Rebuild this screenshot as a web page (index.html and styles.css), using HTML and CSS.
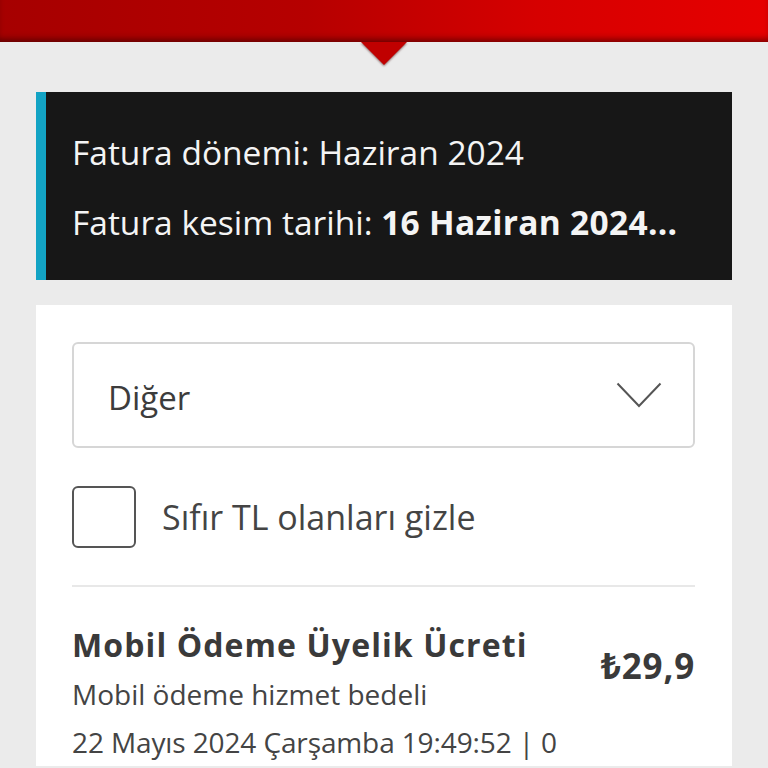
FILE: index.html
```html
<!DOCTYPE html>
<html lang="tr">
<head>
<meta charset="utf-8">
<title>Fatura</title>
<link rel="stylesheet" href="styles.css">
</head>
<body>
<header class="topbar"></header>
<main class="content">
  <section class="period">
    <p class="period-line">Fatura dönemi: Haziran 2024</p>
    <p class="period-line">Fatura kesim tarihi: <b>16 Haziran 2024...</b></p>
  </section>
  <section class="card">
    <div class="select">
      <span class="select-text">Diğer</span>
      <svg class="chevron" width="46" height="26" viewBox="0 0 46 26"><path d="M1.5 1.5 L23 24 L44.5 1.5" fill="none" stroke="#555" stroke-width="2"/></svg>
    </div>
    <label class="check-row">
      <span class="checkbox"></span>
      <span class="check-label">Sıfır TL olanları gizle</span>
    </label>
    <div class="item">
      <div class="item-info">
        <div class="item-title">Mobil Ödeme Üyelik Ücreti</div>
        <div class="item-sub">Mobil ödeme hizmet bedeli</div>
        <div class="item-date">22 Mayıs 2024 Çarşamba 19:49:52 | 0</div>
      </div>
      <div class="item-price">₺29,9</div>
    </div>
  </section>
</main>
</body>
</html>
```
FILE: styles.css
```css
* { box-sizing: border-box; }
html, body { margin: 0; padding: 0; }
body {
  background: #ebebeb;
  font-family: "Open Sans", "Noto Sans", sans-serif;
  color: #3a3a3a;
  height: 768px;
  overflow: hidden;
}
.topbar {
  position: relative;
  height: 42px;
  background: linear-gradient(90deg, #a60000 0%, #b60000 40%, #d60000 70%, #e60000 100%);
  box-shadow: inset 0 -6px 6px -3px rgba(40,0,0,0.55);
}
.topbar::after {
  content: "";
  position: absolute;
  left: 361px;
  top: 42px;
  width: 0;
  height: 0;
  border-left: 23px solid transparent;
  border-right: 23px solid transparent;
  border-top: 23px solid #c00000;
  filter: drop-shadow(0 1px 1px rgba(60,0,0,0.6));
}
.content {
  padding: 50px 36px 0 36px;
}
.period {
  height: 188px;
  background: #171717;
  border-left: 10px solid #13a3c4;
  padding: 25px 0 0 26px;
  color: #f4f4f4;
}
.period-line {
  margin: 0;
  font-size: 33.5px;
  line-height: 70px;
  white-space: nowrap;
}
.period-line b { font-weight: 700; letter-spacing: 0.3px; }
.card {
  margin-top: 25px;
  background: #fff;
  padding: 37px 37px 0 36px;
}
.select {
  height: 106px;
  border: 2px solid #d6d6d6;
  border-radius: 6px;
  display: flex;
  align-items: center;
  justify-content: space-between;
  padding: 4px 31px 0 34px;
}
.select-text {
  font-size: 33px;
  color: #3c3c3c;
}
.chevron { display: block; margin-top: -4px; }
.check-row {
  display: flex;
  align-items: center;
  gap: 26px;
  margin-top: 38px;
}
.checkbox {
  width: 64px;
  height: 62px;
  border: 2px solid #555;
  border-radius: 6px;
  flex: none;
}
.check-label {
  font-size: 34px;
  color: #444;
}
.item {
  margin-top: 37px;
  border-top: 2px solid #e8e8e8;
  padding-top: 32px;
  display: flex;
  justify-content: space-between;
  align-items: flex-start;
}
.item-title {
  font-size: 32px;
  font-weight: 700;
  line-height: 51px;
  color: #3a3a3a;
  letter-spacing: 1.1px;
}
.item-sub, .item-date {
  font-size: 28px;
  line-height: 48px;
  color: #444;
  white-space: nowrap;
}
.item-date { letter-spacing: -0.12px; }
.item-price {
  margin-top: 23px;
  font-size: 35px;
  font-weight: 700;
  line-height: 48px;
  letter-spacing: 0.8px;
  color: #3a3a3a;
}
```
